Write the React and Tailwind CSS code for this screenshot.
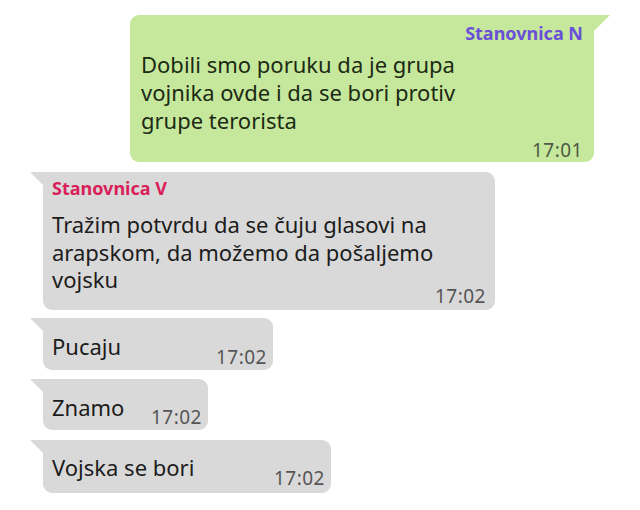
import React from "react";

const font = { fontFamily: '"Noto Sans", "Open Sans", sans-serif' };

function Tail({ side, color }) {
  if (side === "right") {
    return (
      <div
        className={`absolute top-0 right-[-16px] w-[17px] h-[17px] ${color} [clip-path:polygon(0_0,100%_0,0_100%)]`}
      />
    );
  }
  return (
    <div
      className={`absolute top-0 left-[-13px] w-[14px] h-[14px] ${color} [clip-path:polygon(0_0,100%_0,100%_100%)]`}
    />
  );
}

function SmallBubble({ text, width, height, textPad, timePad }) {
  return (
    <div
      className="relative ml-[43px] bg-[#d9d9d9] rounded-r-[9px] rounded-bl-[9px] flex justify-between pl-[9px] pr-[6px]"
      style={{ width, height }}
    >
      <Tail side="left" color="bg-[#d9d9d9]" />
      <span className="text-[22px] leading-none text-[#1c1c1c]" style={{ paddingTop: textPad }}>
        {text}
      </span>
      <span className="text-[19px] tracking-[0.5px] leading-none text-[#555555]" style={{ paddingTop: timePad }}>
        17:02
      </span>
    </div>
  );
}

export default function App() {
  return (
    <div className="w-[640px] h-[510px] bg-white pt-[15px] flex flex-col" style={font}>
      <div className="relative ml-[130px] w-[464px] h-[147px] bg-[#c6e89c] rounded-l-[9px] rounded-br-[9px] px-[11px] pt-[6px]">
        <Tail side="right" color="bg-[#c6e89c]" />
        <div className="text-right text-[18px] font-bold text-[#6a4fd8] leading-[24px]">Stanovnica N</div>
        <div className="mt-[5px] text-[22px] leading-[28px] text-[#1c2a14]">
          <div>Dobili smo poruku da je grupa</div>
          <div>vojnika ovde i da se bori protiv</div>
          <div>grupe terorista</div>
        </div>
        <div className="text-right text-[19px] tracking-[0.5px] text-[#4d5a45] leading-[22px] mt-[5px]">17:01</div>
      </div>

      <div className="relative mt-[10px] ml-[43px] w-[452px] h-[138px] bg-[#d9d9d9] rounded-r-[9px] rounded-bl-[9px] px-[9px] pt-[4px]">
        <Tail side="left" color="bg-[#d9d9d9]" />
        <div className="text-[18px] font-bold text-[#d81f5a] leading-[24px]">Stanovnica V</div>
        <div className="mt-[11px] text-[22px] leading-[27.5px] text-[#1c1c1c]">
          <div>Tražim potvrdu da se čuju glasovi na</div>
          <div>arapskom, da možemo da pošaljemo</div>
          <div>vojsku</div>
        </div>
        <div className="text-right text-[19px] tracking-[0.5px] text-[#555555] leading-[20px] -mt-[8px]">17:02</div>
      </div>

      <div className="mt-[8px]">
        <SmallBubble text="Pucaju" width={230} height={52} textPad={17} timePad={30} />
      </div>
      <div className="mt-[9px]">
        <SmallBubble text="Znamo" width={165} height={51} textPad={17} timePad={29} />
      </div>
      <div className="mt-[10px]">
        <SmallBubble text="Vojska se bori" width={288} height={53} textPad={16} timePad={29} />
      </div>
    </div>
  );
}
